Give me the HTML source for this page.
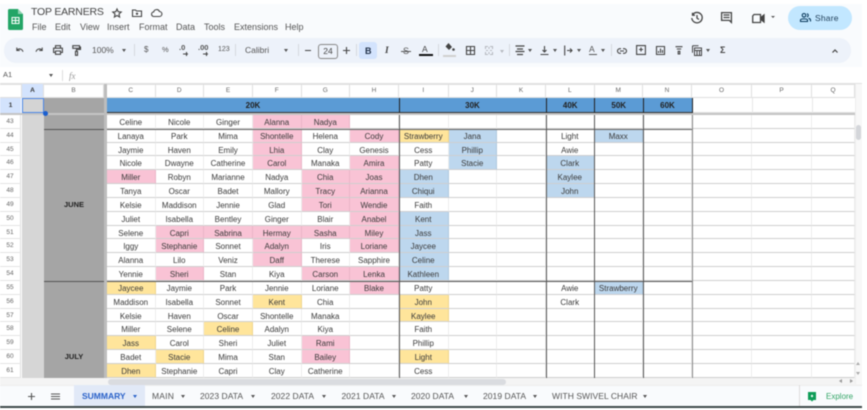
<!DOCTYPE html>
<html><head><meta charset="utf-8"><title>TOP EARNERS</title>
<style>
html,body{margin:0;padding:0;background:#fff}
body{width:867px;height:410px;position:relative;overflow:hidden;font-family:"Liberation Sans",sans-serif;color:#444}
#w{position:absolute;left:0;top:0;width:867px;height:410px;overflow:hidden;filter:blur(.4px)}
.a{position:absolute}
.t{position:absolute;white-space:nowrap;line-height:12px}
.c{transform:translateX(-50%)}
svg{position:absolute;overflow:visible;fill:none;stroke:#444;stroke-width:1.1}
.car{position:absolute;width:0;height:0;border-left:2.5px solid transparent;border-right:2.5px solid transparent;border-top:3px solid #555}
.div{position:absolute;width:1px;height:12px;top:44px;background:#d5d9df}
.m{font-size:9px;top:21px;color:#555}
.tb{font-size:8.5px;top:44px;color:#555}
.hd{position:absolute;top:84px;height:14px;line-height:14px;text-align:center;font-size:6.5px;color:#666;border-right:1px solid #dfdfdf;border-bottom:1px solid #dfdfdf;box-sizing:border-box}
.g{position:absolute;left:107px;top:115px;display:grid;grid-template-columns:48.5px 48.5px 49px 48.5px 48.5px 49px 49.5px 48.5px 49px 48.5px 48.5px 49px 60px 60px 43px;grid-template-rows:repeat(19,13.83px);font-size:8px;color:#3a3a3a}
.g div{box-sizing:border-box;border-right:1px solid #ececec;border-bottom:1px solid #cfcfcf;text-align:center;line-height:15px;white-space:nowrap;overflow:hidden}
.g .p{background:#f9c3d5;border-right-color:#eab6c8}
.g .y{background:#ffe59b;border-right-color:#eed58f}
.g .b{background:#bdd7ee;border-right-color:#b0c9df}
.rn{position:absolute;left:0;top:115px;width:21px;display:grid;grid-template-rows:repeat(19,13.83px);font-size:6.5px;color:#666;text-align:center}
.rn div{border-bottom:1px solid #e4e4e4;line-height:13px;box-sizing:border-box;border-right:1px solid #dfdfdf}
.v{position:absolute;width:1px;top:115px;height:263px;background:#555}
.tab{position:absolute;top:391px;font-size:8.5px;line-height:11px;letter-spacing:.05px;color:#555;white-space:nowrap}
.h{position:absolute;top:98px;height:15px;line-height:15px;text-align:center;font-size:8px;font-weight:bold;color:#222}
</style></head><body><div id="w">
<div class="a" style="left:0;top:4px;width:862px;height:63px;background:#f9fbfd"></div>
<svg style="left:8px;top:9px;stroke:none" width="15" height="21" viewBox="0 0 15 21"><path d="M1.500 0H10l5 5v14.500a1.500 1.500 0 0 1-1.500 1.500h-12A1.500 1.500 0 0 1 0 19.500v-18A1.500 1.500 0 0 1 1.500 0z" fill="#23a566"/><path d="M10 0l5 5h-5z" fill="#8ed1b1"/><path d="M3.500 8h8v7h-8z" fill="#fff"/><path d="M4.500 9h2.500v2H4.500zM8 9h2.500v2H8zM4.500 12h2.500v2H4.500zM8 12h2.500v2H8z" fill="#23a566"/></svg>
<span class="t" style="left:31px;top:6px;font-size:10.500px;color:#444;letter-spacing:-.2px">TOP EARNERS</span>
<svg style="left:112px;top:8px" width="10" height="10" viewBox="0 0 10 10"><path d="M5 1l1.200 2.700 3 .3-2.200 2 .6 3L5 7.500 2.400 9l.6-3L.8 4l3-.3z"/></svg>
<svg style="left:132px;top:9px" width="10" height="8" viewBox="0 0 10 8"><path d="M.5 1h3l1 1h5v5.500h-9zM5 3.500v2.500M3.800 4.700h2.400"/></svg>
<svg style="left:151px;top:9px" width="11" height="8" viewBox="0 0 11 8"><path d="M3 7.500a2.300 2.300 0 0 1-.3-4.600 3 3 0 0 1 5.700-.4 2.500 2.500 0 0 1 0 5z"/></svg>
<span class="t m" style="left:32px">File</span><span class="t m" style="left:55px">Edit</span><span class="t m" style="left:80px">View</span><span class="t m" style="left:107px">Insert</span><span class="t m" style="left:139px">Format</span><span class="t m" style="left:176px">Data</span><span class="t m" style="left:204px">Tools</span><span class="t m" style="left:234px">Extensions</span><span class="t m" style="left:285px">Help</span>

<svg style="left:691px;top:12px;stroke-width:1.300" width="12" height="12" viewBox="0 0 12 12"><path d="M1.500 3A5.200 5.200 0 1 1 .8 6M1.500 .8V3.200h2.400M6 3v3.200l2 1.300"/></svg>
<svg style="left:721px;top:12px;stroke-width:1.300" width="11" height="11" viewBox="0 0 11 11"><path d="M.6.6h9.800v9.800l-2-2H.6zM2.500 3h6M2.500 5.500h6"/></svg>
<svg style="left:752px;top:13px;stroke-width:1.300" width="14" height="11" viewBox="0 0 14 11"><path d="M2 1.500h6.500v8H.7V3z"/><path d="M9.500 4l2.500-2v7l-2.500-2z" fill="#444"/></svg>
<div class="car" style="left:771px;top:16px;border-left-width:2px;border-right-width:2px;border-top-width:2px"></div>
<div class="a" style="left:788px;top:6px;width:64px;height:24px;border-radius:12px;background:#c2e7ff"></div>
<svg style="left:800px;top:13px;stroke:#0a3a5c" width="11" height="9" viewBox="0 0 11 9"><circle cx="4" cy="2.300" r="1.800"/><path d="M.5 8.500V7c0-1.500 7-1.500 7 0v1.500zM7 .6a1.800 1.800 0 0 1 0 3.400M8.500 5.300c1.500.3 2 1 2 1.700v1.500"/></svg>
<span class="t" style="left:815px;top:12px;font-size:8.500px;color:#23425c;letter-spacing:.2px">Share</span>

<div class="a" style="left:4px;top:38px;width:847px;height:24.500px;border-radius:12px;background:#edf2fa"></div>
<svg style="left:16px;top:47px;stroke-width:1" width="8" height="7" viewBox="0 0 8 7"><path d="M.8 .5v3h3M1 3.300c1.500-2 5-2 6 1.500"/></svg>
<svg style="left:35px;top:47px;stroke-width:1" width="8" height="7" viewBox="0 0 8 7"><path d="M7.200 .5v3h-3M7 3.300c-1.500-2-5-2-6 1.500"/></svg>
<svg style="left:53px;top:45px;stroke-width:1.100" width="10" height="10" viewBox="0 0 10 10"><path d="M2.500 3V.7h5V3M2.500 7.500H.6V3.200h8.800v4.300H7.500M2.500 6h5v3.300h-5z"/></svg>
<svg style="left:72px;top:45px;stroke-width:1.100" width="9" height="11" viewBox="0 0 9 11"><path d="M.8.700h6.700v2.600H.8zM7.500 2h1v2.500H4.500v1.800M3.500 6.300h2v4h-2z"/></svg>
<span class="t tb" style="left:92px">100%</span><div class="car" style="left:122px;top:49px"></div><div class="div" style="left:134px"></div>
<span class="t tb" style="left:144px;font-size:8px">$</span><span class="t tb" style="left:162px;font-size:7.500px">%</span>
<span class="t tb" style="left:179px;font-size:7.500px;font-weight:bold;top:42px">.0</span><svg style="left:183px;top:52px" width="6" height="4"><path d="M0 2h5M3.500 0v4"/></svg>
<span class="t tb" style="left:198px;font-size:7.500px;font-weight:bold;top:42px">.00</span><svg style="left:203px;top:52px" width="6" height="4"><path d="M0 2h5M3.500 0v4"/></svg>
<span class="t tb" style="left:218px;font-size:7px">123</span><div class="div" style="left:235px"></div>
<span class="t tb" style="left:245px;font-size:8.500px">Calibri</span><div class="car" style="left:284px;top:49px"></div><div class="div" style="left:298px"></div>
<span class="a" style="left:305px;top:50px;width:6px;height:1px;background:#444"></span>
<div class="a" style="left:318px;top:44px;width:18px;height:13px;border:1px solid #888;border-radius:3px;text-align:center;font-size:8.500px;line-height:13px;color:#444">24</div>
<svg style="left:343px;top:47px" width="7" height="7"><path d="M0 3.500h7M3.500 0v7"/></svg><div class="div" style="left:356px"></div>
<div class="a" style="left:359px;top:42px;width:18px;height:17px;border-radius:3px;background:#d3e3fd"></div>
<span class="t" style="left:365px;top:45px;font-size:9px;font-weight:bold;color:#23324a">B</span>
<span class="t" style="left:385px;top:45px;font-size:9.500px;font-weight:bold;font-style:italic;font-family:'Liberation Serif',serif;color:#444">I</span>
<span class="t" style="left:403px;top:45px;font-size:9px;color:#555">S</span><div class="a" style="left:401px;top:51px;width:10px;height:1px;background:#555"></div>
<span class="t" style="left:422px;top:43px;font-size:8.500px;color:#444">A</span><div class="a" style="left:419px;top:54px;width:14px;height:2px;background:#111"></div><div class="div" style="left:438px"></div>
<svg style="left:444px;top:43px;stroke:none" width="11" height="9" viewBox="0 0 11 9"><path d="M4.500 0l3.500 4-3 3-3.500-3.500z" fill="#444"/><circle cx="9.500" cy="6.500" r="1.300" fill="#444"/></svg><div class="a" style="left:443px;top:55px;width:13px;height:1.500px;background:#d0d0d0"></div>
<svg style="left:466px;top:46px" width="9" height="9" viewBox="0 0 9 9"><path d="M.5.500h8v8h-8zM4.500.5v8M.5 4.500h8"/></svg>
<svg style="left:485px;top:46px;stroke:#b6bac0" width="8" height="9" viewBox="0 0 8 9"><path d="M.5 3V.5h2.500M5 .5h2.500V3M.5 6v2.500H3M5 8.500h2.500V6M4 1v2M4 6v2M1 4.500h2M5 4.500h2"/></svg><div class="car" style="left:500px;top:50px;border-top-color:#b6bac0"></div><div class="div" style="left:509px"></div>
<svg style="left:515px;top:45px" width="10" height="11" viewBox="0 0 10 11"><path d="M.5 1h9M2 4h6M.5 6.500h9M2 9.500h6" stroke-width="1.200"/></svg><div class="car" style="left:528px;top:49px"></div>
<svg style="left:540px;top:45px" width="9" height="11" viewBox="0 0 9 11"><path d="M4.500 1v6M2.500 5l2 2 2-2M.5 9.500h8" stroke-width="1.100"/></svg><div class="car" style="left:553px;top:49px"></div>
<svg style="left:564px;top:45px" width="9" height="11" viewBox="0 0 9 11"><path d="M.7.500v10M3 5.500h5M6 3.500l2 2-2 2" stroke-width="1.100"/></svg><div class="car" style="left:577px;top:49px"></div>
<span class="t" style="left:589px;top:43px;font-size:8.500px;color:#555">A</span><div class="a" style="left:589px;top:54px;width:8px;height:1px;background:#555"></div><div class="car" style="left:601px;top:49px"></div><div class="div" style="left:611px"></div>
<svg style="left:617px;top:48px;stroke-width:1.100" width="10" height="6" viewBox="0 0 10 6"><path d="M4 .7H2.800a2.300 2.300 0 0 0 0 4.600H4M6 .7h1.200a2.300 2.300 0 0 1 0 4.600H6M3 3h4"/></svg>
<svg style="left:636px;top:45px;stroke-width:1.100" width="10" height="10" viewBox="0 0 10 10"><path d="M.6.6h8.800v8.800h-8.800zM5 2.500v4M3 4.500h4"/></svg>
<svg style="left:656px;top:46px" width="9" height="9" viewBox="0 0 9 9"><path d="M.5.500h8v8h-8zM2.500 7V5M4.500 7V2.500M6.500 7V4"/></svg>
<svg style="left:675px;top:46px;stroke-width:1.100" width="8" height="8" viewBox="0 0 8 8"><path d="M.5 .7h7M1.800 3h4.400M3.200 5.300h1.600V8H3.200z"/></svg>
<svg style="left:692px;top:45px" width="10" height="11" viewBox="0 0 10 11"><path d="M.5.700h6M.5.700v7M2.500 3h7v7.500h-7zM2.500 5.500h7M5 5.500v5M7.500 5.500v5" stroke-width="1"/></svg><div class="car" style="left:706px;top:49px"></div>
<span class="t" style="left:720px;top:44px;font-size:9px;font-weight:bold;color:#444">Σ</span>
<svg style="left:832px;top:49px;stroke-width:1.200" width="6" height="4"><path d="M.5 3.500L3 1l2.500 2.500"/></svg>

<div class="a" style="left:0;top:67px;width:862px;height:16px;background:#fff"></div>
<span class="t" style="left:3px;top:69px;font-size:7.500px;color:#555">A1</span><div class="car" style="left:49px;top:74px"></div>
<div class="a" style="left:62px;top:70px;width:1px;height:11px;background:#ddd"></div>
<span class="t" style="left:69px;top:70px;font-size:9px;font-style:italic;font-family:'Liberation Serif',serif;color:#999">fx</span>
<div class="a" style="left:0;top:83px;width:862px;height:1.500px;background:#e1e1e1"></div>

<div class="hd" style="left:0;width:22px"></div>
<div class="hd" style="left:22px;width:22px;background:#d3e3fd;font-weight:bold;color:#333">A</div>
<div class="hd" style="left:44px;width:60px">B</div>
<div class="hd" style="left:107px;width:48.500px">C</div><div class="hd" style="left:155.500px;width:48.500px">D</div><div class="hd" style="left:204px;width:49px">E</div><div class="hd" style="left:253px;width:48.500px">F</div><div class="hd" style="left:301.500px;width:48.500px">G</div><div class="hd" style="left:350px;width:49px">H</div><div class="hd" style="left:399px;width:49.500px">I</div><div class="hd" style="left:448.500px;width:48.500px">J</div><div class="hd" style="left:497px;width:49px">K</div><div class="hd" style="left:546px;width:48.500px">L</div><div class="hd" style="left:594.500px;width:48.500px">M</div><div class="hd" style="left:643px;width:49px">N</div><div class="hd" style="left:692px;width:60px">O</div><div class="hd" style="left:752px;width:60px">P</div><div class="hd" style="left:812px;width:43px">Q</div>

<div class="a" style="left:0;top:98px;width:21px;height:15px;background:#d3e3fd;text-align:center;font-size:6.500px;line-height:15px;font-weight:bold;color:#333">1</div>
<div class="a" style="left:22px;top:98px;width:22px;height:15px;background:#d4d4d4;border:1px solid #4a86e8;box-sizing:border-box"></div>
<div class="a" style="left:44px;top:98px;width:60px;height:15px;background:#a5a5a5"></div>
<div class="a" style="left:107px;top:98px;width:585px;height:15px;background:#5b9bd5;border-bottom:1px solid #333;box-sizing:border-box"></div>
<div class="h" style="left:107px;width:292px">20K</div><div class="h" style="left:399px;width:147px">30K</div><div class="h" style="left:546px;width:48.500px">40K</div><div class="h" style="left:594.500px;width:48.500px">50K</div><div class="h" style="left:643px;width:49px">60K</div>
<div class="a" style="left:692px;top:98px;width:163px;height:15px;border-bottom:1px solid #dfdfdf;box-sizing:border-box"></div>
<div class="a" style="left:751.500px;top:98px;width:1px;height:15px;background:#e8e8e8"></div><div class="a" style="left:811.500px;top:98px;width:1px;height:15px;background:#e8e8e8"></div>
<div class="a" style="left:399px;top:98px;width:1px;height:15px;background:#222"></div><div class="a" style="left:546px;top:98px;width:1px;height:15px;background:#222"></div><div class="a" style="left:594px;top:98px;width:1px;height:15px;background:#222"></div><div class="a" style="left:643px;top:98px;width:1px;height:15px;background:#222"></div><div class="a" style="left:691.500px;top:98px;width:1px;height:15px;background:#222"></div>

<div class="a" style="left:22px;top:115px;width:22px;height:263px;background:#d6d6d6"></div>
<div class="a" style="left:44px;top:115px;width:60px;height:263px;background:#a5a5a5"></div>
<div class="a" style="left:44px;top:128.500px;width:60px;height:1px;background:#555"></div>
<div class="a" style="left:44px;top:281px;width:60px;height:1px;background:#555"></div>
<span class="t c" style="left:74px;top:199px;font-size:7.500px;font-weight:bold;color:#222">JUNE</span>
<span class="t c" style="left:74px;top:351px;font-size:7.500px;font-weight:bold;color:#222">JULY</span>

<div class="rn"><div>43</div><div>44</div><div>45</div><div>46</div><div>47</div><div>48</div><div>49</div><div>50</div><div>51</div><div>52</div><div>53</div><div>54</div><div>55</div><div>56</div><div>57</div><div>58</div><div>59</div><div>60</div><div>61</div></div>

<div class="g">
<div>Celine</div><div>Nicole</div><div>Ginger</div><div class="p">Alanna</div><div class="p">Nadya</div><div></div><div></div><div></div><div></div><div></div><div></div><div></div><div></div><div></div><div></div>
<div>Lanaya</div><div>Park</div><div>Mima</div><div class="p">Shontelle</div><div>Helena</div><div class="p">Cody</div><div class="y">Strawberry</div><div class="b">Jana</div><div></div><div>Light</div><div class="b">Maxx</div><div></div><div></div><div></div><div></div>
<div>Jaymie</div><div>Haven</div><div>Emily</div><div class="p">Lhia</div><div>Clay</div><div>Genesis</div><div>Cess</div><div class="b">Phillip</div><div></div><div>Awie</div><div></div><div></div><div></div><div></div><div></div>
<div>Nicole</div><div>Dwayne</div><div>Catherine</div><div class="p">Carol</div><div>Manaka</div><div class="p">Amira</div><div>Patty</div><div class="b">Stacie</div><div></div><div class="b">Clark</div><div></div><div></div><div></div><div></div><div></div>
<div class="p">Miller</div><div>Robyn</div><div>Marianne</div><div>Nadya</div><div class="p">Chia</div><div class="p">Joas</div><div class="b">Dhen</div><div></div><div></div><div class="b">Kaylee</div><div></div><div></div><div></div><div></div><div></div>
<div>Tanya</div><div>Oscar</div><div>Badet</div><div>Mallory</div><div class="p">Tracy</div><div class="p">Arianna</div><div class="b">Chiqui</div><div></div><div></div><div class="b">John</div><div></div><div></div><div></div><div></div><div></div>
<div>Kelsie</div><div>Maddison</div><div>Jennie</div><div>Glad</div><div class="p">Tori</div><div class="p">Wendie</div><div>Faith</div><div></div><div></div><div></div><div></div><div></div><div></div><div></div><div></div>
<div>Juliet</div><div>Isabella</div><div>Bentley</div><div>Ginger</div><div>Blair</div><div class="p">Anabel</div><div class="b">Kent</div><div></div><div></div><div></div><div></div><div></div><div></div><div></div><div></div>
<div>Selene</div><div class="p">Capri</div><div class="p">Sabrina</div><div class="p">Hermay</div><div class="p">Sasha</div><div class="p">Miley</div><div class="b">Jass</div><div></div><div></div><div></div><div></div><div></div><div></div><div></div><div></div>
<div>Iggy</div><div class="p">Stephanie</div><div>Sonnet</div><div class="p">Adalyn</div><div>Iris</div><div class="p">Loriane</div><div class="b">Jaycee</div><div></div><div></div><div></div><div></div><div></div><div></div><div></div><div></div>
<div>Alanna</div><div>Lilo</div><div>Veniz</div><div class="p">Daff</div><div>Therese</div><div>Sapphire</div><div class="b">Celine</div><div></div><div></div><div></div><div></div><div></div><div></div><div></div><div></div>
<div>Yennie</div><div class="p">Sheri</div><div>Stan</div><div>Kiya</div><div class="p">Carson</div><div class="p">Lenka</div><div class="b">Kathleen</div><div></div><div></div><div></div><div></div><div></div><div></div><div></div><div></div>
<div class="y">Jaycee</div><div>Jaymie</div><div>Park</div><div>Jennie</div><div>Loriane</div><div class="p">Blake</div><div>Patty</div><div></div><div></div><div>Awie</div><div class="b">Strawberry</div><div></div><div></div><div></div><div></div>
<div>Maddison</div><div>Isabella</div><div>Sonnet</div><div class="y">Kent</div><div>Chia</div><div></div><div class="y">John</div><div></div><div></div><div>Clark</div><div></div><div></div><div></div><div></div><div></div>
<div>Kelsie</div><div>Haven</div><div>Oscar</div><div>Shontelle</div><div>Manaka</div><div></div><div class="y">Kaylee</div><div></div><div></div><div></div><div></div><div></div><div></div><div></div><div></div>
<div>Miller</div><div>Selene</div><div class="y">Celine</div><div>Adalyn</div><div>Kiya</div><div></div><div>Faith</div><div></div><div></div><div></div><div></div><div></div><div></div><div></div><div></div>
<div class="y">Jass</div><div>Carol</div><div>Sheri</div><div>Juliet</div><div class="p">Rami</div><div></div><div>Phillip</div><div></div><div></div><div></div><div></div><div></div><div></div><div></div><div></div>
<div>Badet</div><div class="y">Stacie</div><div>Mima</div><div>Stan</div><div class="p">Bailey</div><div></div><div class="y">Light</div><div></div><div></div><div></div><div></div><div></div><div></div><div></div><div></div>
<div class="y">Dhen</div><div>Stephanie</div><div>Capri</div><div>Clay</div><div>Catherine</div><div></div><div>Cess</div><div></div><div></div><div></div><div></div><div></div><div></div><div></div><div></div>
</div>

<div class="a" style="left:107px;top:128.500px;width:585px;height:1px;background:#666"></div>
<div class="a" style="left:107px;top:281px;width:585px;height:1px;background:#555"></div>
<div class="v" style="left:399px"></div><div class="v" style="left:546px"></div><div class="v" style="left:594px"></div><div class="v" style="left:643px"></div><div class="v" style="left:691.500px;background:#888;width:1.500px"></div>

<div class="a" style="left:0;top:113px;width:860px;height:2px;background:#c4c4c4"></div>
<div class="a" style="left:104px;top:84px;width:3px;height:294px;background:#bdbdbd"></div>
<div class="a" style="left:42.500px;top:110.500px;width:5px;height:5px;border-radius:50%;background:#1a5fd0"></div>

<div class="a" style="left:0;top:378px;width:862px;height:7px;background:#f4f4f4"></div>
<div class="a" style="left:108px;top:379px;width:398px;height:5.500px;border-radius:3px;background:#dadce0"></div>
<div class="a" style="left:855px;top:84px;width:7px;height:300px;background:#f8f8f8;border-left:1px solid #eee;box-sizing:border-box"></div>
<div class="a" style="left:855.500px;top:125px;width:5px;height:15px;border-radius:3px;background:#d4d6da"></div>
<svg style="left:839px;top:379px;stroke:none" width="14" height="5"><path d="M3 0v4L0 2zM11 0v4l3-2z" fill="#999"/></svg>
<svg style="left:856px;top:362px;stroke:none" width="5" height="14"><path d="M0 3h4L2 0zM0 10h4l-2 3z" fill="#aaa"/></svg>

<div class="a" style="left:0;top:385px;width:862px;height:21px;background:#f9fbfd;border-top:1px solid #eee;box-sizing:border-box"></div>
<div class="a" style="left:0;top:406px;width:862px;height:1.500px;background:#3e4a4a"></div>
<svg style="left:28px;top:393px;stroke:#555" width="7" height="7"><path d="M0 3.500h7M3.500 0v7"/></svg>
<svg style="left:51px;top:393px;stroke:#555" width="9" height="7"><path d="M0 1h9M0 3.500h9M0 6h9"/></svg>
<div class="a" style="left:74px;top:385px;width:71px;height:21px;background:#e1e9f7"></div>
<span class="tab" style="left:82px;color:#2a62c9;font-weight:bold;letter-spacing:0">SUMMARY</span><div class="car" style="left:132.500px;top:395px;border-top-color:#2a62c9"></div>
<span class="tab" style="left:152px;letter-spacing:.2px">MAIN</span><div class="car" style="left:180.500px;top:395px"></div>
<span class="tab" style="left:200px">2023 DATA</span><div class="car" style="left:250.500px;top:395px"></div>
<span class="tab" style="left:271px">2022 DATA</span><div class="car" style="left:321.500px;top:395px"></div>
<span class="tab" style="left:341.500px">2021 DATA</span><div class="car" style="left:391.500px;top:395px"></div>
<span class="tab" style="left:411px">2020 DATA</span><div class="car" style="left:463.500px;top:395px"></div>
<span class="tab" style="left:483px">2019 DATA</span><div class="car" style="left:532.500px;top:395px"></div>
<span class="tab" style="left:552px">WITH SWIVEL CHAIR</span><div class="car" style="left:642.500px;top:395px"></div>
<div class="a" style="left:799px;top:385px;width:1px;height:21px;background:#ddd"></div>
<svg style="left:808px;top:392px;stroke:none" width="9" height="10" viewBox="0 0 9 10"><path d="M0 0h8v8H5.500L4 9.500 2.500 8H0z" fill="#0f9d58"/><path d="M4 2.500L5.300 4 4 5.500 2.700 4z" fill="#fff"/></svg>
<span class="tab" style="left:826px;color:#34a567;font-size:8px;letter-spacing:0">Explore</span>
</div></body></html>
